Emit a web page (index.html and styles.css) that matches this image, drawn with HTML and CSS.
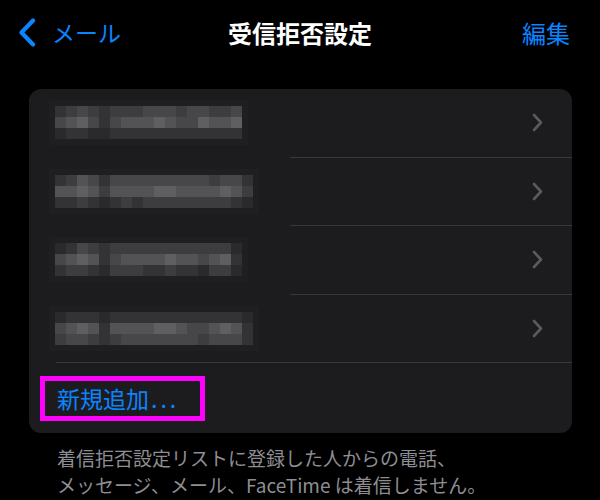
FILE: index.html
```html
<!DOCTYPE html>
<html>
	<head>
		<meta charset="UTF-8">
		<title>受信拒否設定</title>
		<link rel="stylesheet" href="styles.css">
	</head>
	<body>
		<div class="nav">
			<a class="back" href="javascript:;">
				<svg width="18" height="29" viewBox="0 0 18 29"><path d="M15 2.5 L3.5 14.5 L15 26.5" fill="none" stroke="#0a84ff" stroke-width="4.2" stroke-linecap="round" stroke-linejoin="round"/></svg>
				<span>メール</span>
			</a>
			<div class="title">受信拒否設定</div>
			<a class="edit" href="javascript:;">編集</a>
		</div>

		<div class="card">
			<div class="row">
				<div class="cell">
					<div class="blur w17">
						<i class="s2"></i><i class="s3"></i><i class="s4"></i><i class="s3"></i><i class="s2"></i><i class="s3"></i><i class="s3"></i><i class="s3"></i><i class="s4"></i><i class="s4"></i><i class="s4"></i><i class="s3"></i><i class="s4"></i><i class="s4"></i><i class="s3"></i><i class="s3"></i><i class="s4"></i>
						<i class="s4"></i><i class="s5"></i><i class="s6"></i><i class="s4"></i><i class="s2"></i><i class="s4"></i><i class="s5"></i><i class="s5"></i><i class="s5"></i><i class="s6"></i><i class="s5"></i><i class="s4"></i><i class="s4"></i><i class="s6"></i><i class="s5"></i><i class="s5"></i><i class="s6"></i>
						<i class="s1"></i><i class="s2"></i><i class="s2"></i><i class="s1"></i><i class="s1"></i><i class="s2"></i><i class="s2"></i><i class="s2"></i><i class="s2"></i><i class="s2"></i><i class="s2"></i><i class="s2"></i><i class="s2"></i><i class="s2"></i><i class="s2"></i><i class="s2"></i><i class="s2"></i>
					</div>
					<svg class="chev" width="11" height="19" viewBox="0 0 11 19"><path d="M2 2 L9 9.5 L2 17" fill="none" stroke="#5a5a5e" stroke-width="2.6" stroke-linecap="round" stroke-linejoin="round"/></svg>
				</div>
				<div class="sep"></div>
			</div>
			<div class="row">
				<div class="cell">
					<div class="blur w18">
						<i class="s2"></i><i class="s3"></i><i class="s5"></i><i class="s4"></i><i class="s2"></i><i class="s4"></i><i class="s4"></i><i class="s4"></i><i class="s4"></i><i class="s4"></i><i class="s4"></i><i class="s4"></i><i class="s4"></i><i class="s4"></i><i class="s3"></i><i class="s4"></i><i class="s4"></i><i class="s2"></i>
						<i class="s5"></i><i class="s5"></i><i class="s6"></i><i class="s5"></i><i class="s3"></i><i class="s5"></i><i class="s5"></i><i class="s5"></i><i class="s5"></i><i class="s6"></i><i class="s6"></i><i class="s5"></i><i class="s5"></i><i class="s5"></i><i class="s5"></i><i class="s6"></i><i class="s5"></i><i class="s3"></i>
						<i class="s2"></i><i class="s2"></i><i class="s3"></i><i class="s2"></i><i class="s1"></i><i class="s2"></i><i class="s3"></i><i class="s2"></i><i class="s3"></i><i class="s3"></i><i class="s3"></i><i class="s3"></i><i class="s3"></i><i class="s3"></i><i class="s3"></i><i class="s3"></i><i class="s2"></i><i class="s1"></i>
					</div>
					<svg class="chev" width="11" height="19" viewBox="0 0 11 19"><path d="M2 2 L9 9.5 L2 17" fill="none" stroke="#5a5a5e" stroke-width="2.6" stroke-linecap="round" stroke-linejoin="round"/></svg>
				</div>
				<div class="sep"></div>
			</div>
			<div class="row">
				<div class="cell">
					<div class="blur w17">
						<i class="s1"></i><i class="s2"></i><i class="s4"></i><i class="s3"></i><i class="s2"></i><i class="s3"></i><i class="s3"></i><i class="s3"></i><i class="s3"></i><i class="s3"></i><i class="s3"></i><i class="s3"></i><i class="s3"></i><i class="s3"></i><i class="s3"></i><i class="s3"></i><i class="s1"></i>
						<i class="s4"></i><i class="s5"></i><i class="s6"></i><i class="s5"></i><i class="s2"></i><i class="s4"></i><i class="s5"></i><i class="s5"></i><i class="s5"></i><i class="s5"></i><i class="s6"></i><i class="s5"></i><i class="s5"></i><i class="s4"></i><i class="s5"></i><i class="s6"></i><i class="s2"></i>
						<i class="s2"></i><i class="s3"></i><i class="s3"></i><i class="s2"></i><i class="s1"></i><i class="s3"></i><i class="s3"></i><i class="s3"></i><i class="s2"></i><i class="s2"></i><i class="s3"></i><i class="s2"></i><i class="s2"></i><i class="s1"></i><i class="s3"></i><i class="s3"></i><i class="s1"></i>
					</div>
					<svg class="chev" width="11" height="19" viewBox="0 0 11 19"><path d="M2 2 L9 9.5 L2 17" fill="none" stroke="#5a5a5e" stroke-width="2.6" stroke-linecap="round" stroke-linejoin="round"/></svg>
				</div>
				<div class="sep"></div>
			</div>
			<div class="row">
				<div class="cell">
					<div class="blur w18">
						<i class="s1"></i><i class="s2"></i><i class="s2"></i><i class="s2"></i><i class="s1"></i><i class="s2"></i><i class="s2"></i><i class="s2"></i><i class="s2"></i><i class="s2"></i><i class="s2"></i><i class="s2"></i><i class="s2"></i><i class="s2"></i><i class="s2"></i><i class="s2"></i><i class="s2"></i><i class="s1"></i>
						<i class="s4"></i><i class="s5"></i><i class="s6"></i><i class="s5"></i><i class="s2"></i><i class="s5"></i><i class="s5"></i><i class="s5"></i><i class="s5"></i><i class="s6"></i><i class="s6"></i><i class="s5"></i><i class="s4"></i><i class="s4"></i><i class="s5"></i><i class="s6"></i><i class="s5"></i><i class="s2"></i>
						<i class="s3"></i><i class="s4"></i><i class="s4"></i><i class="s3"></i><i class="s2"></i><i class="s3"></i><i class="s4"></i><i class="s4"></i><i class="s4"></i><i class="s4"></i><i class="s4"></i><i class="s4"></i><i class="s4"></i><i class="s3"></i><i class="s4"></i><i class="s4"></i><i class="s4"></i><i class="s2"></i>
					</div>
					<svg class="chev" width="11" height="19" viewBox="0 0 11 19"><path d="M2 2 L9 9.5 L2 17" fill="none" stroke="#5a5a5e" stroke-width="2.6" stroke-linecap="round" stroke-linejoin="round"/></svg>
				</div>
				<div class="sep full"></div>
			</div>
			<div class="add">
				<a class="mark" href="javascript:;">新規追加<span class="dots">...</span></a>
			</div>
		</div>

		<p class="note">着信拒否設定リストに登録した人からの電話、<br>メッセージ、メール、FaceTime は着信しません。</p>
	</body>
</html>
```

FILE: styles.css
```css
body{
	margin: 0;
	background-color: #000;
	color: #fff;
	font-family: "Noto Sans CJK JP", "Noto Sans", sans-serif;
}
a{
	text-decoration: none;
	color: #0a84ff;
}
.nav{
	height: 64px;
	display: grid;
	grid-template-columns: 1fr auto 1fr;
	align-items: center;
	padding: 0 30px;
}
.back{
	display: flex;
	align-items: center;
	gap: 16px;
	margin-left: -12px;
	font-size: 23px;
}
.back svg{
	display: block;
}
.title{
	font-size: 24px;
	font-weight: bold;
}
.edit{
	justify-self: end;
	font-size: 24px;
}
.card{
	margin: 25px 28px 0 29px;
	background-color: #1c1c1e;
	border-radius: 12px;
	overflow: hidden;
}
.row{
	height: 68.5px;
	display: flex;
	flex-direction: column;
}
.cell{
	flex: 1;
	display: flex;
	align-items: center;
	justify-content: space-between;
	padding: 0 29px 0 26px;
}
.sep{
	height: 1px;
	background-color: #38383a;
	margin-left: 261px;
}
.sep.full{
	margin-left: 27px;
}
.blur{
	display: grid;
	grid-auto-rows: 11px;
	box-shadow: 0 0 0 6px #1f1f21;
}
.w17{
	grid-template-columns: repeat(17, 11px);
}
.w18{
	grid-template-columns: repeat(18, 11px);
}
.blur i{
	display: block;
}
.s1{ background-color: #2a2a2c; }
.s2{ background-color: #333335; }
.s3{ background-color: #3d3d3f; }
.s4{ background-color: #474749; }
.s5{ background-color: #535355; }
.s6{ background-color: #5f5f61; }
.chev{
	display: block;
}
.add{
	height: 70px;
	display: flex;
	align-items: center;
	padding-left: 11px;
}
.mark{
	display: flex;
	align-items: center;
	height: 45px;
	box-sizing: border-box;
	border: 5px solid #ff00ff;
	padding: 0 21px 0 12px;
	font-size: 23px;
}
.dots{
	margin-left: 2px;
	letter-spacing: 3px;
}
.note{
	margin: 11px 0 0 57px;
	color: #8d8d93;
	font-size: 19px;
	line-height: 27px;
}
```
